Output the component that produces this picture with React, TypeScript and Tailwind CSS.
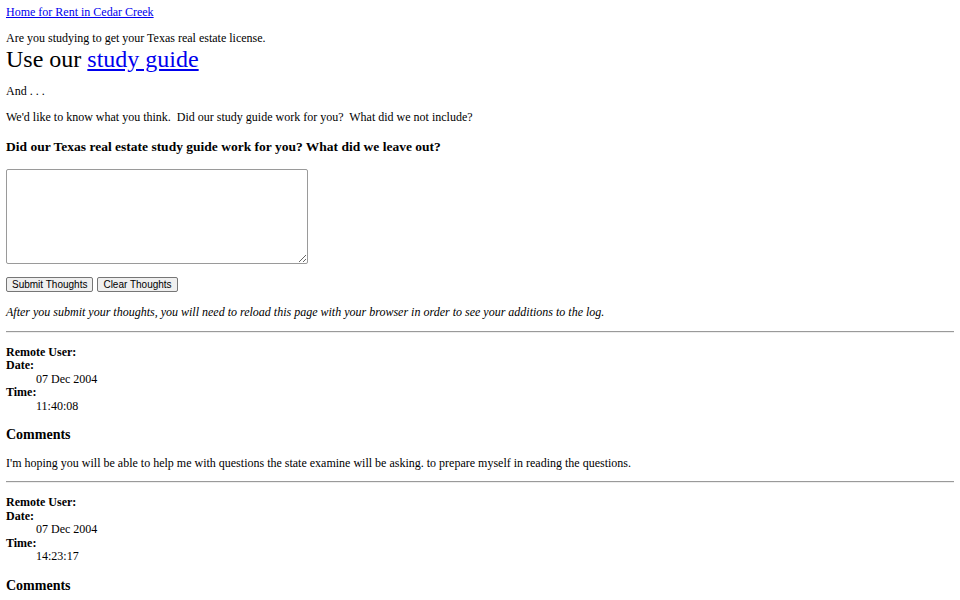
import React from "react";

function Entry({ date, time, comment }: { date: string; time: string; comment?: string }) {
  return (
    <div>
      <dl className="mt-[13px] leading-[13.5px]">
        <dt className="font-bold">Remote User:</dt>
        <dd></dd>
        <dt className="font-bold">Date:</dt>
        <dd className="ml-[30px]">{date}</dd>
        <dt className="font-bold">Time:</dt>
        <dd className="ml-[30px]">{time}</dd>
      </dl>
      <h3 className="text-[14px] font-bold mt-[14px] mb-[14px] leading-[16px]">Comments</h3>
      {comment !== undefined && <p className="mt-[13px] mb-[10px]">{comment}</p>}
    </div>
  );
}

export default function App() {
  return (
    <div
      className="bg-white text-black p-[6px] text-[12px] leading-[13.8px] min-h-[600px]"
      style={{ fontFamily: '"Liberation Serif", "Times New Roman", serif' }}
    >
      <a href="#" className="text-[#0000ee] underline">Home for Rent in Cedar Creek</a>
      <p className="mt-[12px]">
        Are you studying to get your Texas real estate license.
        <br />
        <span className="text-[24px] leading-[27px]">
          Use our <a href="#" className="text-[#0000ee] underline">study guide</a>
        </span>
      </p>
      <p className="mt-[12px]">And . . .</p>
      <p className="mt-[13px] whitespace-pre">We'd like to know what you think.  Did our study guide work for you?  What did we not include?</p>
      <h3 className="text-[13.5px] font-bold mt-[14px] mb-[14px] leading-[16px]">
        Did our Texas real estate study guide work for you? What did we leave out?
      </h3>
      <textarea className="block w-[302px] h-[95px] border border-[#9a9a9a] rounded-[2px] resize-y mt-[7px]" />
      <div className="mt-[13px] flex gap-[4px]" style={{ fontFamily: '"Liberation Sans", Arial, sans-serif' }}>
        <button className="h-[15px] px-[5px] text-[10px] leading-[13px] bg-[#efefef] border border-[#767676] rounded-[2px]">Submit Thoughts</button>
        <button className="h-[15px] px-[5px] text-[10px] leading-[13px] bg-[#efefef] border border-[#767676] rounded-[2px]">Clear Thoughts</button>
      </div>
      <p className="mt-[14px] italic">After you submit your thoughts, you will need to reload this page with your browser in order to see your additions to the log.</p>
      <hr className="mt-[11px] border-t border-[#9a9a9a] border-b border-b-[#eeeeee]" />
      <Entry
        date="07 Dec 2004"
        time="11:40:08"
        comment="I'm hoping you will be able to help me with questions the state examine will be asking. to prepare myself in reading the questions."
      />
      <hr className="border-t border-[#9a9a9a] border-b border-b-[#eeeeee]" />
      <Entry date="07 Dec 2004" time="14:23:17" comment="" />
    </div>
  );
}
